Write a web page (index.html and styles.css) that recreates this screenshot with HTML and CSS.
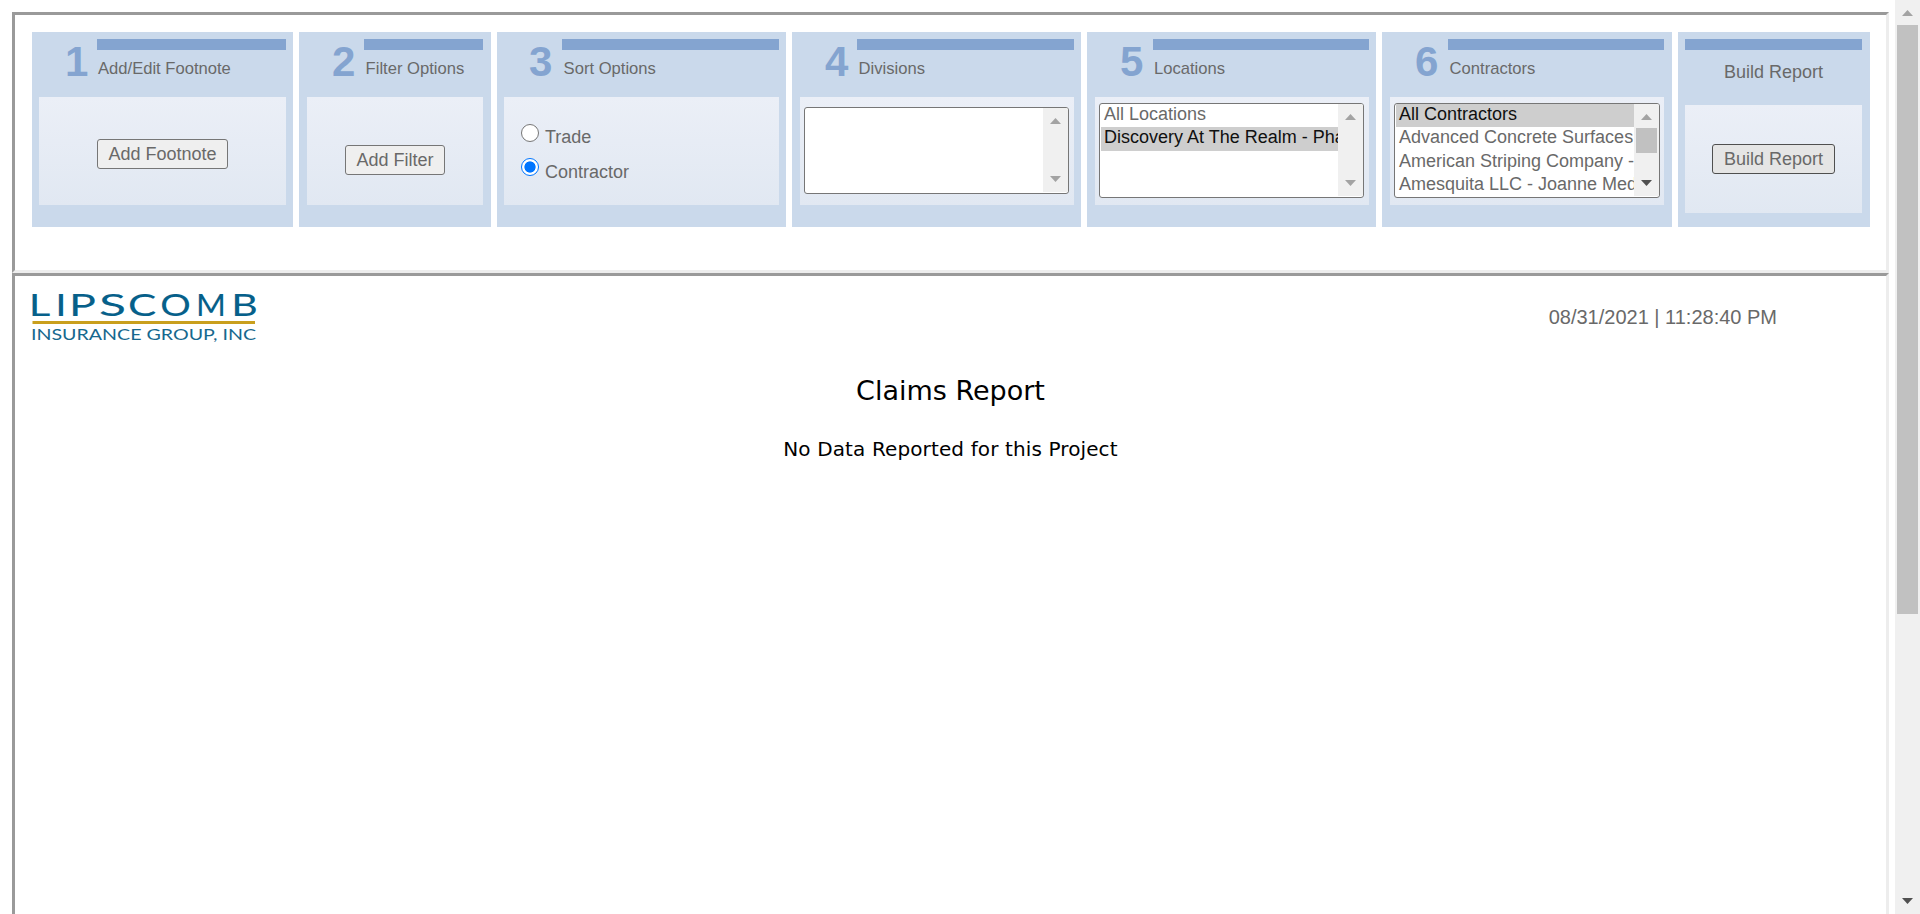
FILE: index.html
```
<!DOCTYPE html>
<html lang="en">
<head>
<meta charset="utf-8">
<title>Claims Report</title>
<link rel="stylesheet" href="styles.css">
</head>
<body>
<div class="page">
  <main class="frames">
    <section class="frame toolbar">
      <div class="panel p1">
        <header class="head"><span class="num">1</span><div class="label"><div class="bar"></div><div class="title">Add/Edit Footnote</div></div></header>
        <div class="body center"><button class="btn">Add Footnote</button></div>
      </div>
      <div class="panel p2">
        <header class="head"><span class="num">2</span><div class="label"><div class="bar"></div><div class="title indent">Filter Options</div></div></header>
        <div class="body center low"><button class="btn">Add Filter</button></div>
      </div>
      <div class="panel p3">
        <header class="head"><span class="num">3</span><div class="label"><div class="bar"></div><div class="title indent">Sort Options</div></div></header>
        <div class="body radios">
          <div class="option"><span class="radio"></span><span class="caption">Trade</span></div>
          <div class="option"><span class="radio on"></span><span class="caption second">Contractor</span></div>
        </div>
      </div>
      <div class="panel p4">
        <header class="head"><span class="num">4</span><div class="label"><div class="bar"></div><div class="title indent">Divisions</div></div></header>
        <div class="body lists">
          <div class="list short"><div class="rows"></div>
            <div class="scroll"><svg class="arrow" viewBox="0 0 11 6"><path d="M0 6L5.5 0L11 6z"/></svg><svg class="arrow" viewBox="0 0 11 6"><path d="M0 0L5.5 6L11 0z"/></svg></div></div>
        </div>
      </div>
      <div class="panel p5">
        <header class="head"><span class="num">5</span><div class="label"><div class="bar"></div><div class="title">Locations</div></div></header>
        <div class="body lists">
          <div class="list"><div class="rows"><div class="row">All Locations</div><div class="row sel">Discovery At The Realm - Pha</div></div>
            <div class="scroll"><svg class="arrow" viewBox="0 0 11 6"><path d="M0 6L5.5 0L11 6z"/></svg><svg class="arrow" viewBox="0 0 11 6"><path d="M0 0L5.5 6L11 0z"/></svg></div></div>
        </div>
      </div>
      <div class="panel p6">
        <header class="head"><span class="num">6</span><div class="label"><div class="bar"></div><div class="title indent">Contractors</div></div></header>
        <div class="body lists">
          <div class="list"><div class="rows"><div class="row sel">All Contractors</div><div class="row">Advanced Concrete Surfaces</div><div class="row">American Striping Company -</div><div class="row">Amesquita LLC - Joanne Med</div></div>
            <div class="scroll"><svg class="arrow" viewBox="0 0 11 6"><path d="M0 6L5.5 0L11 6z"/></svg><div class="thumb small"></div><svg class="arrow dark" viewBox="0 0 11 6"><path d="M0 0L5.5 6L11 0z"/></svg></div></div>
        </div>
      </div>
      <div class="panel p7">
        <div class="bar"></div>
        <div class="build-title">Build Report</div>
        <div class="body center build"><button class="btn hover">Build Report</button></div>
      </div>
    </section>
    <section class="frame report">
      <div class="top">
        <svg class="logo" viewBox="0 0 230 54" width="230" height="54">
          <text class="brand" y="27.5"><tspan x="-3.2" textLength="21.5" lengthAdjust="spacingAndGlyphs">L</tspan><tspan x="23.2" textLength="11.3" lengthAdjust="spacingAndGlyphs">I</tspan><tspan x="37" textLength="26.9" lengthAdjust="spacingAndGlyphs">P</tspan><tspan x="67" textLength="27" lengthAdjust="spacingAndGlyphs">S</tspan><tspan x="96" textLength="28.3" lengthAdjust="spacingAndGlyphs">C</tspan><tspan x="128.3" textLength="30.5" lengthAdjust="spacingAndGlyphs">O</tspan><tspan x="164" textLength="29.9" lengthAdjust="spacingAndGlyphs">M</tspan><tspan x="199.3" textLength="26.5" lengthAdjust="spacingAndGlyphs">B</tspan></text>
          <rect class="rule" x="0.5" y="33" width="222.5" height="3"/>
          <text class="sub" x="-1" y="51.5" textLength="225" lengthAdjust="spacingAndGlyphs">INSURANCE GROUP, INC</text>
        </svg>
        <div class="date">08/31/2021 | 11:28:40 PM</div>
      </div>
      <h1 class="heading">Claims Report</h1>
      <p class="empty">No Data Reported for this Project</p>
    </section>
  </main>
  <aside class="pagebar"><svg class="arrow" viewBox="0 0 11 6"><path d="M0 6L5.5 0L11 6z"/></svg><div class="thumb"></div><svg class="arrow dark" viewBox="0 0 11 6"><path d="M0 0L5.5 6L11 0z"/></svg></aside>
</div>
</body>
</html>
```
FILE: styles.css
```
* { box-sizing: border-box; }
body { margin: 0; background: #fff; overflow: hidden; font-family: "Liberation Sans", Arial, sans-serif; font-size: 18px; color: #696969; }
.page { display: flex; height: 914px; overflow: hidden; }
.frames { width: 1895px; padding: 12px 6px 0 12px; }
.frame { border: 3px solid; border-color: #9a9a9a #ededed #ededed #9a9a9a; }
.toolbar { height: 261px; padding: 17px 0 0 17px; display: flex; gap: 6px; }
.panel { height: 195px; background: #cad9eb; padding: 7px 7px 0 8px; flex: none; }
.p1 { width: 261px; padding-left: 7px; }
.p2 { width: 192px; padding-right: 8px; }
.p3 { width: 289px; padding-left: 7px; }
.p4, .p5 { width: 289px; }
.p6 { width: 290px; padding-right: 8px; }
.p7 { width: 192px; padding-left: 7px; padding-right: 8px; }
.head { display: flex; height: 58px; }
.num { width: 57px; padding-left: 25px; flex: none; font-size: 42px; line-height: 46px; font-weight: bold; color: #84a4d0; }
.p1 .num, .p3 .num { width: 58px; }
.p1 .num { padding-left: 26px; }
.p5 .num, .p6 .num { width: 58px; }
.label { flex: 1; }
.bar { height: 11px; background: #84a4d0; }
.title { font-size: 16.6px; line-height: 20px; margin-top: 9px; padding-left: 1px; white-space: nowrap; }
.title.indent { padding-left: 1.6px; }
.body { height: 108px; background: linear-gradient(#ebeff7, #e1e8f2); }
.center { display: flex; justify-content: center; align-items: flex-start; padding-top: 42px; }
.low { padding-top: 48px; }
.btn { height: 30px; padding: 0 11px; font: 18px "Liberation Sans", Arial, sans-serif; letter-spacing: -.02px; color: #696969; background: #efefef; border: 1px solid #767676; border-radius: 3px; white-space: nowrap; }
.btn.hover { background: #e5e5e5; border-color: #4f4f4f; }
.build-title { height: 55px; padding-top: 12px; line-height: 20px; text-align: center; }
.build { padding-top: 39px; }
.radios { padding: 27px 0 0 17px; }
.option { display: flex; height: 34px; gap: 6px; }
.radio { width: 18px; height: 18px; border: 1px solid #767676; border-radius: 50%; background: #fff; }
.radio.on { border: 1.5px solid #0075ff; background: radial-gradient(circle, #0075ff 5.2px, #fff 6px); }
.caption { line-height: 20px; padding-top: 3px; }
.caption.second { padding-top: 4px; }
.lists { padding: 6px 0 0 4px; }
.list { width: 265px; height: 95px; display: flex; background: #fff; border: 1px solid #767676; border-radius: 3px; padding: 0 0 1px 1px; overflow: hidden; }
.p6 .list { width: 266px; }
.list.short { height: 87px; margin-top: 4px; }
.rows { flex: 1; min-width: 0; overflow: hidden; }
.row { height: 23.4px; line-height: 20px; padding-left: 3px; white-space: nowrap; overflow: hidden; }
.row.sel { background: #cecece; color: #101010; }
.scroll { width: 25px; background: #f0f0f0; display: flex; flex-direction: column; align-items: center; justify-content: space-between; padding: 10px 0; }
.arrow { width: 11px; height: 6px; fill: #a3a3a3; flex: none; display: block; }
.arrow.dark { fill: #505050; }
.thumb { background: #c1c1c1; width: 21px; height: 589px; }
.thumb.small { height: 25px; margin: -19px 0 0; }
.report { height: 660px; padding-left: 17px; }
.top { display: flex; justify-content: space-between; height: 86px; padding: 12px 109px 0 0; }
.logo { overflow: visible; }
.brand { font: 31px Lato, sans-serif; fill: #06608a; stroke: #06608a; stroke-width: .1px; }
.sub { font: 14.5px Lato, sans-serif; fill: #16688e; }
.rule { fill: #c99f1d; }
.date { font-size: 20px; line-height: 24px; padding-top: 17px; }
.heading { margin: 12px 0 0; padding-right: 17px; color: #000; font: 27px/34px "DejaVu Sans", Verdana, sans-serif; text-align: center; height: 58px; }
.empty { margin: 5px 0 0; padding-right: 17px; color: #000; font: 20px/24px "DejaVu Sans", Verdana, sans-serif; letter-spacing: .12px; text-align: center; }
.pagebar { width: 25px; height: 914px; background: #f0f0f0; display: flex; flex-direction: column; align-items: center; padding: 10px 0; }
.pagebar .thumb { margin: 9px 0 auto; }
```
